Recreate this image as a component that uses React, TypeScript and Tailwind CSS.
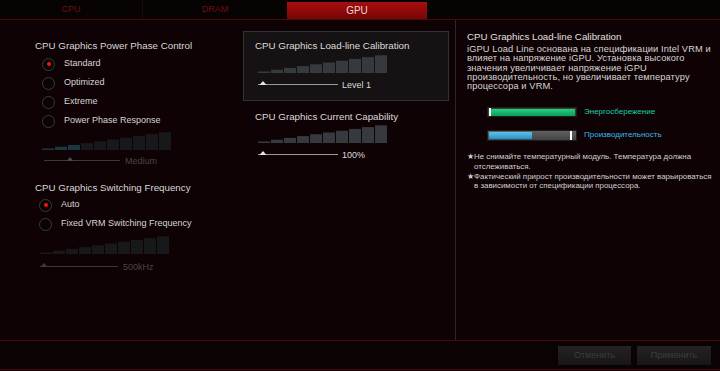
import React from "react";

const Stairs = ({ fill, lit = 0, litFill = "#1a3640" }: { fill: string; lit?: number; litFill?: string }) => (
  <svg width="130" height="18" viewBox="0 0 130 18">
    {Array.from({ length: 10 }).map((_, i) => {
      const h = 1.5 + i * 1.8;
      return <rect key={i} x={i * 13} y={18 - h} width={12} height={h} fill={i < lit ? litFill : fill} />;
    })}
  </svg>
);

const Slider = ({ width, at, line, knob }: { width: number; at: number; line: string; knob: string }) => (
  <svg width={width} height="12" viewBox={`0 0 ${width} 12`}>
    <rect x="0" y="4" width={width} height="1" fill={line} />
    <polygon points={`${at - 3.5},5 ${at + 3.5},5 ${at},1`} fill={knob} />
  </svg>
);

const Radio = ({ on, label }: { on?: boolean; label: string }) => (
  <div className="flex h-[19px] items-center gap-[9px]">
    <div className="flex h-[13px] w-[13px] items-center justify-center rounded-full border border-[#3e3a3a] bg-[#080404]">
      {on && <div className="h-[4px] w-[4px] rounded-full bg-[#ff1010]" />}
    </div>
    <span className="text-[9px] text-[#d6d6d6]">{label}</span>
  </div>
);

export default function App() {
  return (
    <div className="flex h-[371px] w-[720px] flex-col bg-[#0c0203] font-['Liberation_Sans',Arial,sans-serif]">
      {/* tabs */}
      <div className="flex h-[20px] items-end border-b border-[#4a0808] bg-[#080303]">
        <div className="flex h-[18px] w-[143px] items-center justify-center border-r border-[#1a0c0c] text-[9px] text-[#6e0e0e]">CPU</div>
        <div className="flex h-[18px] w-[144px] items-center justify-center text-[9px] text-[#6e0e0e]">DRAM</div>
        <div className="flex h-[17px] w-[140px] items-center justify-center bg-gradient-to-b from-[#a80e0e] to-[#760606] text-[10px] text-[#ecd4d4]">GPU</div>
      </div>

      {/* main */}
      <div className="flex h-[320px] bg-[#0e0204]">
        <div className="flex w-[455px]">
          {/* left column */}
          <div className="flex w-[243px] flex-col pt-[20px]">
            <div className="pl-[35px] text-[9.75px] leading-[12px] text-[#d8d8d8]">CPU Graphics Power Phase Control</div>
            <div className="mt-[2.5px] flex flex-col pl-[42px]">
              <Radio on label="Standard" />
              <Radio label="Optimized" />
              <Radio label="Extreme" />
              <Radio label="Power Phase Response" />
            </div>
            <div className="mt-[1.5px] pl-[42px]">
              <Stairs fill="#17181a" lit={3} />
            </div>
            <div className="mt-[5.5px] flex h-[12px] items-center gap-[5px] pl-[44px]">
              <Slider width={76} at={26} line="#3a3838" knob="#4a4848" />
              <span className="text-[9px] text-[#4a4646]">Medium</span>
            </div>
            <div className="mt-[14.5px] pl-[35px] text-[9.75px] leading-[12px] text-[#d8d8d8]">CPU Graphics Switching Frequency</div>
            <div className="mt-[1.5px] flex flex-col pl-[39px]">
              <Radio on label="Auto" />
              <Radio label="Fixed VRM Switching Frequency" />
            </div>
            <div className="mt-[2.5px] pl-[40px]">
              <Stairs fill="#17181a" />
            </div>
            <div className="mt-[7.5px] flex h-[12px] items-center gap-[5px] pl-[40px]">
              <Slider width={78} at={4} line="#3a3838" knob="#3e3c3c" />
              <span className="text-[9px] text-[#4a4646]">500kHz</span>
            </div>
          </div>

          {/* middle column */}
          <div className="flex w-[206px] flex-col pt-[11px]">
            <div className="flex h-[70px] flex-col border border-[#2c3438] bg-[#161112] pl-[11px] pt-[8px]">
              <div className="text-[9.75px] leading-[12px] text-[#dcdcdc]">CPU Graphics Load-line Calibration</div>
              <div className="mt-[3px] pl-[3px]">
                <Stairs fill="#363a3e" />
              </div>
              <div className="mt-[7px] flex h-[12px] items-center gap-[4px] pl-[3px]">
                <Slider width={80} at={5} line="#9a9a9a" knob="#e6e6e6" />
                <span className="text-[9px] text-[#dcdcdc]">Level 1</span>
              </div>
            </div>
            <div className="flex flex-col pl-[12px] pt-[10px]">
              <div className="text-[9.75px] leading-[12px] text-[#dcdcdc]">CPU Graphics Current Capability</div>
              <div className="mt-[2px] pl-[3px]">
                <Stairs fill="#363a3e" />
              </div>
              <div className="mt-[7px] flex h-[12px] items-center gap-[4px] pl-[3px]">
                <Slider width={80} at={5} line="#9a9a9a" knob="#e6e6e6" />
                <span className="text-[9px] text-[#dcdcdc]">100%</span>
              </div>
            </div>
          </div>
        </div>

        {/* right panel */}
        <div className="flex flex-1 flex-col border-l border-[#2e2626] pl-[11px] pt-[11px]">
          <div className="text-[9.75px] leading-[12px] text-[#e0e0e0]">CPU Graphics Load-line Calibration</div>
          <div className="mt-[2px] text-[9.3px] leading-[9.3px] tracking-[0.1px] text-[#d6d6d6]">
            iGPU Load Line основана на спецификации Intel VRM и
            <br />
            влияет на напряжение iGPU. Установка высокого
            <br />
            значения увеличивает напряжение iGPU
            <br />
            производительность, но увеличивает температуру
            <br />
            процессора и VRM.
          </div>
          <div className="mt-[15px] flex items-center gap-[7px] pl-[20px]">
            <div className="flex h-[10px] w-[90px] items-center border border-[#1e1e1e] bg-[#3c3c3c] px-[1px]">
              <div className="h-[8px] w-[2px] bg-white" />
              <div className="h-[7px] flex-1 rounded-[1px] bg-gradient-to-b from-[#22d07e] to-[#0e9c58]" />
            </div>
            <span className="text-[8px] text-[#1ecfa8]">Энергосбережение</span>
          </div>
          <div className="mt-[11px] flex items-center gap-[7px] pl-[20px]">
            <div className="flex h-[11px] w-[90px] items-center border border-[#1e1e1e] bg-gradient-to-b from-[#606060] to-[#444444] px-[1px]">
              <div className="h-[7px] w-[43px] rounded-[1px] bg-gradient-to-b from-[#5cc4ee] to-[#2a90c4]" />
              <div className="flex-1" />
              <div className="mr-[3px] h-[9px] w-[2px] bg-white" />
            </div>
            <span className="text-[8px] text-[#3cb8e6]">Производительность</span>
          </div>
          <div className="mt-[11px] flex flex-col gap-[0.7px] text-[7.9px] leading-[9.3px] text-[#d0d0d0]">
            <div className="flex gap-[2px]">
              <span className="w-[5px]">★</span>
              <span>
                Не снимайте температурный модуль. Температура должна
                <br />
                отслеживаться.
              </span>
            </div>
            <div className="flex gap-[2px]">
              <span className="w-[5px]">★</span>
              <span>
                Фактический прирост производительности может варьироваться
                <br />
                в зависимости от спецификации процессора.
              </span>
            </div>
          </div>
        </div>
      </div>

      {/* footer */}
      <div className="flex h-[30px] items-start justify-end gap-[6px] border-y border-[#4a0808] bg-[#0a0203] pr-[9px] pt-[5px]">
        <button className="flex h-[19px] w-[73px] items-center justify-center bg-gradient-to-b from-[#242222] to-[#181616] text-[9px] text-[#3e3c3c]">Отменить</button>
        <button className="flex h-[19px] w-[74px] items-center justify-center bg-gradient-to-b from-[#242222] to-[#181616] text-[9px] text-[#3e3c3c]">Применить</button>
      </div>
    </div>
  );
}
